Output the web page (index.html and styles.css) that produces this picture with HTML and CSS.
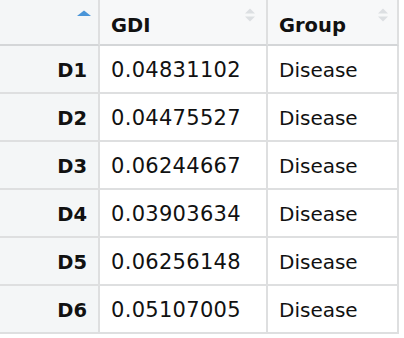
FILE: index.html
```html
<!DOCTYPE html>
<html>
<head>
<meta charset="utf-8">
<link rel="stylesheet" href="styles.css">
</head>
<body>
<table class="grid">
  <thead>
    <tr>
      <th class="idx-h">
        <div class="hcell">
          <span></span>
          <svg class="sort" width="14" height="16" viewBox="0 0 14 16"><polygon points="0,9 7,3.5 14,9" fill="#4a95d8"/></svg>
        </div>
      </th>
      <th class="col-gdi">
        <div class="hcell">
          <span>GDI</span>
          <svg class="sort" width="12" height="16" viewBox="0 0 12 16"><polygon points="1,6.5 6,1.5 11,6.5" fill="#dcdfe2"/><polygon points="1,9.5 6,14.5 11,9.5" fill="#dcdfe2"/></svg>
        </div>
      </th>
      <th class="col-grp">
        <div class="hcell">
          <span>Group</span>
          <svg class="sort" width="12" height="16" viewBox="0 0 12 16"><polygon points="1,6.5 6,1.5 11,6.5" fill="#dcdfe2"/><polygon points="1,9.5 6,14.5 11,9.5" fill="#dcdfe2"/></svg>
        </div>
      </th>
    </tr>
  </thead>
  <tbody>
    <tr><th class="idx">D1</th><td class="num">0.04831102</td><td class="txt">Disease</td></tr>
    <tr><th class="idx">D2</th><td class="num">0.04475527</td><td class="txt">Disease</td></tr>
    <tr><th class="idx">D3</th><td class="num">0.06244667</td><td class="txt">Disease</td></tr>
    <tr><th class="idx">D4</th><td class="num">0.03903634</td><td class="txt">Disease</td></tr>
    <tr><th class="idx">D5</th><td class="num">0.06256148</td><td class="txt">Disease</td></tr>
    <tr><th class="idx">D6</th><td class="num">0.05107005</td><td class="txt">Disease</td></tr>
  </tbody>
</table>
</body>
</html>
```

FILE: styles.css
```css
html, body {
  margin: 0;
  padding: 0;
  background: #ffffff;
}

.grid {
  border-collapse: separate;
  border-spacing: 0;
  font-family: "DejaVu Sans", Verdana, sans-serif;
  color: #111;
  table-layout: fixed;
  width: 399px;
}

.grid th, .grid td {
  box-sizing: border-box;
  border-right: 2px solid #dedfe0;
  border-bottom: 2px solid #dedfe0;
  padding: 0;
  white-space: nowrap;
}

.grid thead th {
  height: 46px;
  background: #f7f8f9;
  font-weight: bold;
  font-size: 19.5px;
  text-align: left;
  vertical-align: middle;
  border-bottom-color: #d4d6d8;
}

.grid thead th.idx-h {
  width: 100px;
  background: #f4f6f7;
}

.grid thead th.col-gdi {
  width: 168px;
}

.grid thead th.col-grp {
  width: 131px;
}

.hcell {
  display: flex;
  justify-content: space-between;
  align-items: flex-start;
  height: 44px;
  padding: 7px 8px 0 11px;
  box-sizing: border-box;
}

.hcell span {
  padding-top: 7px;
}

.col-gdi .hcell {
  padding-right: 10px;
}

.idx-h .hcell {
  padding-right: 7px;
}

.sort {
  display: block;
}

.grid tbody th.idx {
  height: 48px;
  background: #f4f6f7;
  text-align: right;
  font-weight: bold;
  font-size: 19.5px;
  padding-right: 11px;
  padding-top: 3px;
}

.grid tbody td {
  background: #ffffff;
  padding-left: 11px;
  padding-top: 1px;
}

.grid td.num {
  font-size: 21px;
  letter-spacing: 0.3px;
}

.grid td.txt {
  font-size: 20px;
}
```
